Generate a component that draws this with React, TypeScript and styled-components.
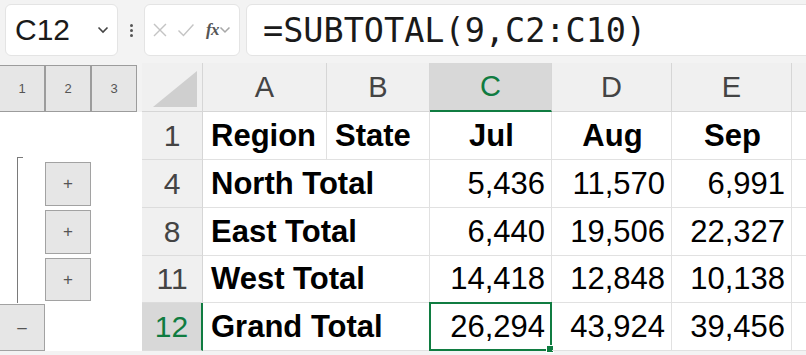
import React from 'react'
import styled, { createGlobalStyle, css } from 'styled-components'

const GREEN = '#107c41'

const GlobalStyle = createGlobalStyle`
  html, body {
    margin: 0;
    padding: 0;
    background: #f3f3f3;
    font-family: 'Liberation Sans', Arial, sans-serif;
    overflow: hidden;
  }
`

const Page = styled.div`
  width: 806px;
  height: 355px;
  background: #f3f3f3;
  overflow: hidden;
`

const FormulaBar = styled.div`
  display: flex;
  align-items: center;
  height: 52px;
  padding: 4px 0 0 5px;
`

const Box = styled.div<{ w?: number; grow?: boolean }>`
  height: 52px;
  box-sizing: border-box;
  background: #fff;
  border: 1px solid #e4e4e4;
  border-radius: 6px;
  display: flex;
  align-items: center;
  ${({ w }) => w && css`width: ${w}px;`}
  ${({ grow }) => grow && css`flex: 1; margin-right: -8px;`}
`

const NameText = styled.span`
  font-size: 30px;
  color: #1a1a1a;
  margin-left: 9px;
  flex: 1;
`

const Chevron = styled.svg<{ light?: boolean }>`
  width: 12px;
  height: 8px;
  margin-right: 8px;
  stroke: ${({ light }) => (light ? '#a8a8a8' : '#444')};
  fill: none;
  stroke-width: 1.6;
`

const Dots = styled.div`
  width: 26px;
  display: flex;
  flex-direction: column;
  align-items: center;
  gap: 2px;
  span {
    width: 3px;
    height: 3px;
    border-radius: 50%;
    background: #555;
  }
`

const IconBtn = styled.svg`
  width: 18px;
  height: 18px;
  stroke: #c4c4c4;
  stroke-width: 1.4;
  fill: none;
`

const Fx = styled.span`
  font-family: 'Liberation Serif', 'Times New Roman', serif;
  font-style: italic;
  font-weight: bold;
  font-size: 17px;
  color: #555;
  margin-left: 11px;
  letter-spacing: -0.5px;
`

const FormulaText = styled.span`
  font-family: 'DejaVu Sans Mono', 'Liberation Mono', monospace;
  font-size: 33.5px;
  color: #1a1a1a;
  margin-left: 16px;
`

const Body = styled.div`
  display: flex;
  margin-top: 7px;
`

const Outline = styled.div`
  width: 142px;
  display: grid;
  grid-template-columns: 45px 46px 46px 5px;
  grid-template-rows: 49px 48px 48px 48px 47px 48px;
`

const LevelBtn = styled.div`
  margin-top: 2px;
  background: #e6e6e6;
  border: 1px solid #9c9c9c;
  display: flex;
  align-items: center;
  justify-content: center;
  font-size: 13px;
  color: #555;
`

const OutlinePane = styled.div`
  grid-column: 1 / 5;
  grid-row: 2 / 7;
  background: #fff;
  display: grid;
  grid-template-columns: 45px 46px 1fr;
  grid-template-rows: 48px 48px 48px 47px 48px;
`

const Bracket = styled.div`
  grid-column: 1;
  grid-row: 1 / 5;
  margin: 45px 0 0 17px;
  width: 5px;
  border-left: 1px solid #7a7a7a;
  border-top: 1px solid #7a7a7a;
`

const GroupBtn = styled.div<{ row: number; col: number }>`
  grid-column: ${({ col }) => col};
  grid-row: ${({ row }) => row};
  margin: ${({ col }) => (col === 2 ? '2px 0 2px 0' : '1px 0 0 0')};
  background: #e6e6e6;
  border: 1px solid #a2a2a2;
  display: flex;
  align-items: center;
  justify-content: center;
  font-size: 17px;
  color: #555;
`

const Sheet = styled.div`
  display: grid;
  grid-template-columns: 61px 124px 103px 122px 120px 120px 30px;
  grid-template-rows: 49px 48px 48px 48px 47px 48px;
  background: #fff;
`

const Corner = styled.div`
  background: #f0f0f0;
  border-right: 1px solid #d6d6d6;
  border-bottom: 1px solid #d6d6d6;
  position: relative;
  svg {
    position: absolute;
    right: 5px;
    bottom: 4px;
  }
`

const ColHead = styled.div<{ active?: boolean }>`
  background: ${({ active }) => (active ? '#d8d8d8' : '#f0f0f0')};
  border-right: 1px solid #d6d6d6;
  border-bottom: ${({ active }) => (active ? `2px solid ${GREEN}` : '1px solid #d6d6d6')};
  color: ${({ active }) => (active ? GREEN : '#444')};
  font-size: 29px;
  display: flex;
  align-items: center;
  justify-content: center;
`

const RowHead = styled.div<{ active?: boolean }>`
  background: ${({ active }) => (active ? '#d8d8d8' : '#f0f0f0')};
  border-right: ${({ active }) => (active ? `2px solid ${GREEN}` : '1px solid #d6d6d6')};
  border-bottom: 1px solid #dcdcdc;
  color: ${({ active }) => (active ? GREEN : '#444')};
  font-size: 30px;
  display: flex;
  align-items: center;
  justify-content: center;
`

const Cell = styled.div<{ bold?: boolean; align?: 'left' | 'center' | 'right'; selected?: boolean }>`
  position: relative;
  box-sizing: border-box;
  border-right: 1px solid #e1e1e1;
  border-bottom: 1px solid #e1e1e1;
  display: flex;
  align-items: center;
  white-space: nowrap;
  color: #000;
  font-size: 31px;
  font-weight: ${({ bold }) => (bold ? 700 : 400)};
  padding: 0 6px 0 8px;
  justify-content: ${({ align }) =>
    align === 'right' ? 'flex-end' : align === 'center' ? 'center' : 'flex-start'};
  ${({ selected }) =>
    selected &&
    css`
      border: 2px solid ${GREEN};
      margin: -1px 0 0 -1px;
      padding: 0 5px 0 7px;
    `}
`

const Handle = styled.span`
  position: absolute;
  right: -4px;
  bottom: -4px;
  width: 6px;
  height: 6px;
  background: ${GREEN};
  border: 1px solid #fff;
`

type Row = {
  num: string
  label: string
  state?: string
  values: string[]
  bold?: boolean
}

const rows: Row[] = [
  { num: '1', label: 'Region', state: 'State', values: ['Jul', 'Aug', 'Sep'], bold: true },
  { num: '4', label: 'North Total', values: ['5,436', '11,570', '6,991'] },
  { num: '8', label: 'East Total', values: ['6,440', '19,506', '22,327'] },
  { num: '11', label: 'West Total', values: ['14,418', '12,848', '10,138'] },
  { num: '12', label: 'Grand Total', values: ['26,294', '43,924', '39,456'] },
]

const ChevronIcon: React.FC<{ light?: boolean }> = ({ light }) => (
  <Chevron light={light} viewBox="0 0 12 8">
    <polyline points="1.5,1.5 6,6 10.5,1.5" />
  </Chevron>
)

const App: React.FC = () => {
  return (
    <Page>
      <GlobalStyle />
      <FormulaBar>
        <Box w={113}>
          <NameText>C12</NameText>
          <ChevronIcon />
        </Box>
        <Dots>
          <span />
          <span />
          <span />
        </Dots>
        <Box w={96}>
          <IconBtn viewBox="0 0 18 18" style={{ marginLeft: 6 }}>
            <line x1="3" y1="3" x2="15" y2="15" />
            <line x1="15" y1="3" x2="3" y2="15" />
          </IconBtn>
          <IconBtn viewBox="0 0 18 18" style={{ marginLeft: 8 }}>
            <polyline points="1.5,9.5 6.5,14.5 16.5,3.5" />
          </IconBtn>
          <Fx>fx</Fx>
          <ChevronIcon light />
        </Box>
        <div style={{ width: 6 }} />
        <Box grow>
          <FormulaText>=SUBTOTAL(9,C2:C10)</FormulaText>
        </Box>
      </FormulaBar>
      <Body>
        <Outline>
          <LevelBtn style={{ borderLeft: 'none' }}>1</LevelBtn>
          <LevelBtn>2</LevelBtn>
          <LevelBtn>3</LevelBtn>
          <OutlinePane>
            <Bracket />
            <GroupBtn row={2} col={2}>+</GroupBtn>
            <GroupBtn row={3} col={2}>+</GroupBtn>
            <GroupBtn row={4} col={2}>+</GroupBtn>
            <GroupBtn row={5} col={1} style={{ borderLeft: 'none' }}>
              –
            </GroupBtn>
          </OutlinePane>
        </Outline>
        <Sheet>
          <Corner>
            <svg width="44" height="36" viewBox="0 0 44 36">
              <polygon points="44,0 44,36 0,36" fill="#cfcfcf" />
            </svg>
          </Corner>
          <ColHead>A</ColHead>
          <ColHead>B</ColHead>
          <ColHead active>C</ColHead>
          <ColHead>D</ColHead>
          <ColHead>E</ColHead>
          <ColHead />
          {rows.map((r) => {
            const isGrand = r.num === '12'
            return (
              <React.Fragment key={r.num}>
                <RowHead active={isGrand}>{r.num}</RowHead>
                <Cell bold style={r.state ? undefined : { borderRight: 'none' }}>
                  {r.label}
                </Cell>
                <Cell bold>{r.state}</Cell>
                {r.values.map((v, i) => (
                  <Cell
                    key={i}
                    bold={r.bold}
                    align={r.bold ? 'center' : 'right'}
                    selected={isGrand && i === 0}
                  >
                    {v}
                    {isGrand && i === 0 && <Handle />}
                  </Cell>
                ))}
                <Cell />
              </React.Fragment>
            )
          })}
        </Sheet>
      </Body>
    </Page>
  )
}

export default App
